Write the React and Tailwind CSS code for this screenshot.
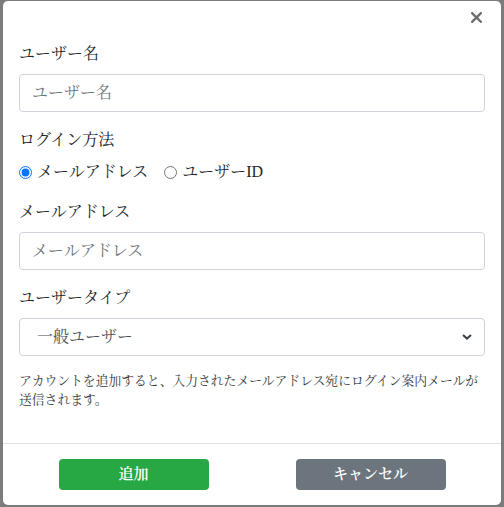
import React from 'react';

const font = { fontFamily: '"Liberation Serif", "Noto Serif CJK JP", "Noto Sans CJK JP", serif' };

const App = () => {
  return (
    <div className="w-[504px] h-[507px] overflow-hidden bg-[#7c7c7c] pt-[1px] pl-[3px]" style={font}>
      <div className="relative w-[498px] h-[504px] bg-white rounded-[5px] flex flex-col text-[#212529]">
        {/* Header */}
        <div className="flex justify-end h-[25px] pr-[19px] pt-[10px]">
          <button className="text-[#6c6c6c] leading-none h-3">
            <svg width="11" height="11" viewBox="0 0 11 11">
              <path d="M1.2 1.2 L9.8 9.8 M9.8 1.2 L1.2 9.8" stroke="currentColor" strokeWidth="2.3" strokeLinecap="square" />
            </svg>
          </button>
        </div>

        {/* Body */}
        <div className="px-4 pt-4 pb-4 flex-1">
          <div className="mb-4">
            <label className="block text-base leading-6 mb-2">ユーザー名</label>
            <input
              type="text"
              placeholder="ユーザー名"
              className="w-full h-[38px] border border-[#ced4da] rounded px-3 text-base placeholder:text-[#6c757d] outline-none"
              style={font}
            />
          </div>

          <div className="mb-4">
            <label className="block text-base leading-6 mb-2">ログイン方法</label>
            <div className="flex items-center h-6">
              <label className="flex items-center mr-4">
                <input type="radio" name="login" defaultChecked className="w-[13px] h-[13px] m-0 mr-[5px] accent-[#0075ff]" />
                <span>メールアドレス</span>
              </label>
              <label className="flex items-center">
                <input type="radio" name="login" className="w-[13px] h-[13px] m-0 mr-[5px]" />
                <span>ユーザーID</span>
              </label>
            </div>
          </div>

          <div className="mb-4">
            <label className="block text-base leading-6 mb-2">メールアドレス</label>
            <input
              type="text"
              placeholder="メールアドレス"
              className="w-full h-[38px] border border-[#ced4da] rounded px-3 text-base placeholder:text-[#6c757d] outline-none"
              style={font}
            />
          </div>

          <div className="mb-4">
            <label className="block text-base leading-6 mb-2">ユーザータイプ</label>
            <div className="relative">
              <select
                className="w-full h-[38px] border border-[#ced4da] rounded pl-[17px] pr-8 text-base text-[#495057] bg-white appearance-none outline-none"
                style={font}
                defaultValue="general"
              >
                <option value="general">一般ユーザー</option>
                <option value="admin">管理者</option>
              </select>
              <svg className="absolute right-[13px] top-[16px] pointer-events-none" width="10" height="6" viewBox="0 0 10 6">
                <path d="M1 1 L5 4.6 L9 1" fill="none" stroke="#3d4247" strokeWidth="2" />
              </svg>
            </div>
          </div>

          <p className="text-[12.8px] leading-[19.2px] mb-4 text-[#343a40]">
            アカウントを追加すると、入力されたメールアドレス宛にログイン案内メールが送信されます。
          </p>
        </div>

        {/* Footer */}
        <div className="border-t border-[#dee2e6] h-[62px] px-3 flex items-center justify-around">
          <button className="w-[150px] h-[31px] rounded bg-[#28a745] text-white text-[15px] font-semibold">追加</button>
          <button className="w-[150px] h-[31px] rounded bg-[#6c757d] text-white text-[15px] font-semibold">キャンセル</button>
        </div>
      </div>
    </div>
  );
};

export default App;
